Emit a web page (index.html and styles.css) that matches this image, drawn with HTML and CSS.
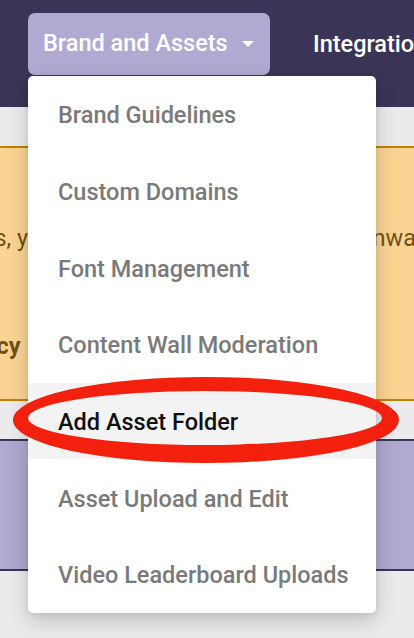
FILE: index.html
```html
<!DOCTYPE html>
<html lang="en">
<head>
<meta charset="utf-8">
<title>Brand and Assets</title>
<link rel="stylesheet" href="styles.css">
</head>
<body>
<header class="nav">
  <div class="nav-item nav-item--open">
    <button class="nav-btn">Brand and Assets <span class="caret"></span></button>
    <ul class="menu">
      <li class="menu-item">Brand Guidelines</li>
      <li class="menu-item">Custom Domains</li>
      <li class="menu-item">Font Management</li>
      <li class="menu-item">Content Wall Moderation</li>
      <li class="menu-item menu-item--active">Add Asset Folder</li>
      <li class="menu-item">Asset Upload and Edit</li>
      <li class="menu-item">Video Leaderboard Uploads</li>
    </ul>
    <svg class="highlight" width="414" height="100" viewBox="0 0 414 100" aria-hidden="true">
      <path fill="#f2200c" fill-rule="evenodd" d="M13,50 a193,43 0 1,0 386,0 a193,43 0 1,0 -386,0 Z M28,48 a177,27 0 1,0 354,0 a177,27 0 1,0 -354,0 Z"/>
    </svg>
  </div>
  <a class="nav-link">Integrations</a>
</header>
<div class="subbar"></div>
<section class="banner">
  <div class="banner-inner">
    <p class="banner-line">With the new brand features, you can now make asset folders onwards.</p>
    <p class="banner-line banner-line--strong">Please see our privacy policy</p>
  </div>
</section>
<div class="gap"></div>
<section class="panel"></section>
</body>
</html>
```

FILE: styles.css
```css
* { box-sizing: border-box; }
html {
  overflow: hidden;
}
html, body { margin: 0; padding: 0; }
body {
  width: 414px;
  height: 638px;
  overflow: hidden;
  background: #ebebed;
  font-family: Roboto, "Noto Sans", Arial, sans-serif;
}
.nav {
  height: 107px;
  background: #3a3556;
  display: flex;
  align-items: flex-start;
  padding: 13px 0 0 28px;
  gap: 43px;
  white-space: nowrap;
}
.nav-item { position: relative; flex: none; }
.nav-btn {
  display: flex;
  align-items: center;
  gap: 14px;
  height: 62px;
  width: 242px;
  padding: 0 0 0 15px;
  border: 0;
  border-radius: 7px;
  background: #b0aad3;
  color: #fff;
  font: 500 23.5px/1 Roboto, sans-serif;
}
.caret {
  width: 0; height: 0;
  border-left: 6.5px solid transparent;
  border-right: 6.5px solid transparent;
  border-top: 6px solid #fff;
}
.nav-link {
  min-width: 0;
  overflow: hidden;
  color: #fff;
  font: 500 23.5px/62px Roboto, sans-serif;
}
.menu {
  position: absolute;
  z-index: 2;
  top: 63px;
  left: 0;
  width: 348px;
  margin: 0;
  padding: 0;
  list-style: none;
  background: #fff;
  border-radius: 5px;
  box-shadow: 0 8px 22px rgba(0,0,0,0.18), 0 2px 6px rgba(0,0,0,0.08);
}
.menu-item {
  height: 76.7px;
  display: flex;
  align-items: center;
  padding: 2px 0 0 30px;
  font-size: 23.5px;
  font-weight: 500;
  color: #7a7a7a;
}
.menu-item--active {
  background: #f3f3f4;
  color: #111;
}
.highlight {
  position: absolute;
  z-index: 3;
  left: -28px;
  top: 357px;
}
.subbar { height: 39px; }
.banner {
  height: 255px;
  background: #fbd494;
  border-top: 2px solid #c08100;
  border-bottom: 2px solid #c08100;
  overflow: hidden;
}
.banner-inner {
  margin-left: -286px;
  padding-top: 74px;
  white-space: nowrap;
  color: #6f5212;
  font-size: 23.5px;
  line-height: 32px;
}
.banner-line { margin: 0 0 76px; }
.banner-line--strong { font-weight: 700; }
.gap { height: 38px; }
.panel {
  height: 132px;
  background: #aeaad0;
  border-top: 2px solid #3a3556;
  border-bottom: 2px solid #3a3556;
}
```
